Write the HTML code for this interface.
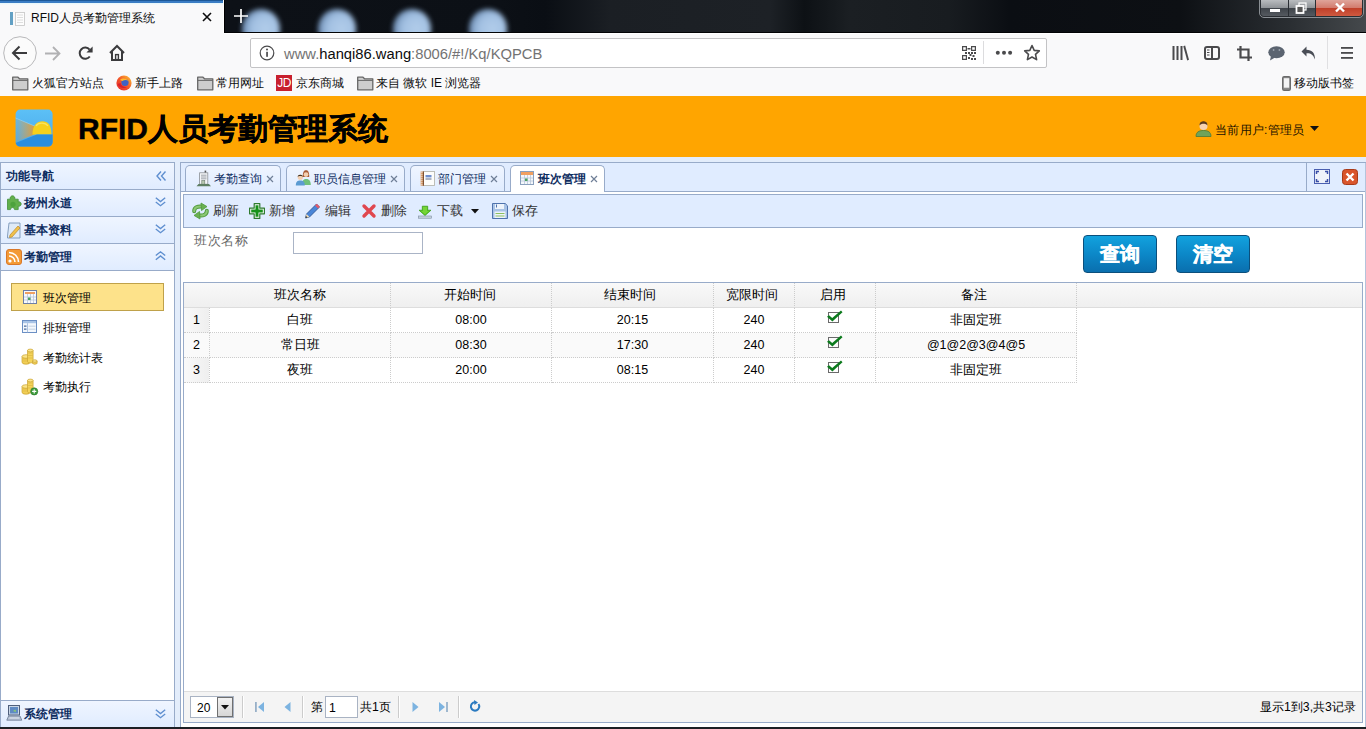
<!DOCTYPE html>
<html><head><meta charset="utf-8">
<style>
*{margin:0;padding:0;box-sizing:border-box}
html,body{width:1366px;height:729px;overflow:hidden;background:#fff;font-family:"Liberation Sans",sans-serif;font-size:12px;color:#000}
.a{position:absolute}
.t{position:absolute;white-space:nowrap;line-height:16px;font-size:12.25px}
svg{position:absolute;overflow:visible}
.ph{background:linear-gradient(to bottom,#eff5ff 0,#e0ecff 100%)}
.navt{color:#0e2d5f;font-weight:bold}
.blob{position:absolute;width:38px;height:40px;border-radius:50%;background:radial-gradient(circle at 62% 50%,#b2cdea 0,#a2c0e2 45%,#6f8fb5 75%,#2a3a50 100%);filter:blur(2.5px)}
.bm{color:#0c0c0d;font-size:12px}
.tb{color:#333;font-size:12.5px}
.dg td{border-right:1px dotted #ccc;border-bottom:1px dotted #ccc;height:25px;text-align:center;padding:0;font-size:12.5px}
</style></head><body>
<!-- ===== title bar ===== -->
<div class="a" style="left:0;top:0;width:1366px;height:33px;background:linear-gradient(90deg,#0d1117 16.4%,#0c1016 36.6%,#0a0e14 39.9%,#1b1f24 44.7%,#1d2126 56.4%,#0d1115 58.9%,#1b1f23 62.2%,#181c20 69.5%,#0b0e13 73.9%,#0d1014 86.4%,#2a2e32 94.4%,#45494c 100.0%);overflow:hidden">
  <div class="blob" style="left:242px;top:9px"></div>
  <div class="blob" style="left:318px;top:9px"></div>
  <div class="blob" style="left:393px;top:9px"></div>
  <div class="blob" style="left:469px;top:9px"></div>
</div>
<div class="a" style="left:224px;top:0;width:1px;height:33px;background:#000"></div><div class="a" style="left:224px;top:32px;width:1142px;height:1px;background:#020305"></div>
<!-- active tab -->
<div class="a" style="left:0;top:0;width:224px;height:33px;background:#f9f9fa"></div>
<div class="a" style="left:0;top:0;width:224px;height:1px;background:#1c5898"></div>
<div class="a" style="left:0;top:1px;width:224px;height:2px;background:#3a7cc4"></div><div class="a" style="left:0;top:3px;width:223px;height:2px;background:linear-gradient(#e2f6fc,#f9f9fa)"></div>
<svg style="left:9px;top:10px" width="17" height="17" viewBox="0 0 17 17"><rect x="1" y="2" width="3" height="13" fill="#62a0c4"/><rect x="6.5" y="2.5" width="9" height="13" fill="#fdfdfd" stroke="#c4c4c4" stroke-width="0.8"/><path d="M8 5h6M8 7.5h6M8 10h6M8 12.5h6" stroke="#d6d6d6" stroke-width="0.8"/></svg>
<div class="t" style="left:31px;top:10px;font-size:12px;color:#0c0c0d">RFID人员考勤管理系统</div>
<svg style="left:202px;top:12px" width="10" height="10" viewBox="0 0 10 10"><path d="M1 1L9 9M9 1L1 9" stroke="#0c0c0d" stroke-width="1.6"/></svg>
<svg style="left:234px;top:9px" width="14" height="14" viewBox="0 0 14 14"><path d="M7 0V14M0 7H14" stroke="#fff" stroke-width="1.7"/></svg>
<!-- window controls -->
<div class="a" style="left:1259px;top:-3px;width:105px;height:21px;border:1px solid #8a8f94;border-radius:0 0 5px 5px;background:#2a2e33"></div>
<div class="a" style="left:1261px;top:0;width:27px;height:16px;background:linear-gradient(#b9bcbf 0,#8f9397 50%,#3f444a 52%,#555a60 100%);border-radius:0 0 0 3px"></div>
<div class="a" style="left:1289px;top:0;width:26px;height:16px;background:linear-gradient(#b9bcbf 0,#8f9397 50%,#3f444a 52%,#555a60 100%)"></div>
<div class="a" style="left:1316px;top:0;width:46px;height:16px;background:linear-gradient(#dfa49a 0,#d27a6c 50%,#c0402a 53%,#cf5a40 100%);border-radius:0 0 3px 0"></div>
<div class="a" style="left:1270px;top:9px;width:10px;height:3px;background:#fff"></div>
<svg style="left:1295px;top:2px" width="12" height="12" viewBox="0 0 12 12"><rect x="4" y="1" width="7" height="7" fill="none" stroke="#fff" stroke-width="1.2"/><rect x="1.5" y="4" width="7" height="7" fill="#555" stroke="#fff" stroke-width="1.8"/></svg>
<svg style="left:1335px;top:3px" width="10" height="9" viewBox="0 0 10 9"><path d="M1 0.5L9 8.5M9 0.5L1 8.5" stroke="#fff" stroke-width="2.4"/></svg>

<!-- ===== nav bar ===== -->
<div class="a" style="left:0;top:33px;width:1366px;height:63px;background:#f9f9fa"></div><div class="a" style="left:224px;top:33px;width:1142px;height:1px;background:#fff"></div><div class="a" style="left:223px;top:0;width:1px;height:33px;background:#fff"></div>
<svg style="left:3px;top:36px" width="34" height="34" viewBox="0 0 34 34"><circle cx="17" cy="17" r="16.3" fill="#fbfbfb" stroke="#b8b8ba" stroke-width="1"/><path d="M10 17H24M16.5 10.5L10 17L16.5 23.5" fill="none" stroke="#3b3b3d" stroke-width="2"/></svg>
<svg style="left:44px;top:45px" width="17" height="17" viewBox="0 0 17 17"><path d="M1 8.5H15M9 2L15.5 8.5L9 15" fill="none" stroke="#b1b1b3" stroke-width="1.8"/></svg>
<svg style="left:77px;top:44px" width="17" height="17" viewBox="0 0 17 17"><path d="M12.6 5.6A5.6 5.6 0 1 0 12.8 12.5" fill="none" stroke="#3b3b3d" stroke-width="2"/><path d="M15.6 2.4V8.6H9.4Z" fill="#3b3b3d"/></svg>
<svg style="left:108px;top:44px" width="18" height="17" viewBox="0 0 18 17"><path d="M2 9L9 2L16 9M4 7.5V16H14V7.5" fill="none" stroke="#3b3b3d" stroke-width="2"/><rect x="7.6" y="10.6" width="2.8" height="5" fill="none" stroke="#3b3b3d" stroke-width="1.4"/></svg>
<div class="a" style="left:250px;top:38px;width:797px;height:30px;background:#fff;border:1px solid #c3c3c5;border-radius:2px"></div>
<svg style="left:259px;top:45px" width="16" height="16" viewBox="0 0 16 16"><circle cx="8" cy="8" r="6.8" fill="none" stroke="#4a4a4c" stroke-width="1.2"/><rect x="7.2" y="6.8" width="1.7" height="5" fill="#4a4a4c"/><circle cx="8" cy="4.6" r="1" fill="#4a4a4c"/></svg>
<div class="t" style="left:284px;top:46px;font-size:14.75px;line-height:17px;color:#737373">www.<span style="color:#0c0c0d">hanqi86.wang</span>:8006/#!/Kq/KQPCB</div>
<svg style="left:962px;top:46px" width="15" height="15" viewBox="0 0 15 15" fill="#4a4a4c">
<path d="M0 0h5v5H0zM1.2 1.2v2.6h2.6V1.2zM9 0h5v5H9zM10.2 1.2v2.6h2.6V1.2zM0 9h5v5H0zM1.2 10.2v2.6h2.6v-2.6z" fill-rule="evenodd"/>
<rect x="5.5" y="2" width="3" height="1.5"/><rect x="6" y="6" width="2" height="2"/><rect x="9" y="6" width="2" height="2"/><rect x="12" y="6" width="2" height="2"/><rect x="7.5" y="8" width="2" height="2"/><rect x="10.5" y="9" width="2" height="2"/><rect x="6" y="11" width="2" height="2"/><rect x="9" y="12" width="2" height="2"/><rect x="12" y="12" width="2" height="2"/><rect x="3" y="6" width="2" height="2"/></svg>
<div class="a" style="left:983px;top:41px;width:1px;height:23px;background:#dcdcde"></div>
<svg style="left:995px;top:50px" width="18" height="6" viewBox="0 0 18 6" fill="#4a4a4c"><circle cx="2.8" cy="2.8" r="2"/><circle cx="9" cy="2.8" r="2"/><circle cx="15.1" cy="2.8" r="2"/></svg>
<svg style="left:1023px;top:44px" width="18" height="18" viewBox="0 0 18 18"><path d="M9 1.5L11.2 6.4L16.3 6.9L12.5 10.4L13.6 15.6L9 13L4.4 15.6L5.5 10.4L1.7 6.9L6.8 6.4Z" fill="none" stroke="#4a4a4c" stroke-width="1.6" stroke-linejoin="round"/></svg>
<!-- right toolbar icons -->
<svg style="left:1172px;top:46px" width="17" height="15" viewBox="0 0 17 15" fill="#4a4a4c"><rect x="0.5" y="0" width="2" height="14"/><rect x="4.5" y="0" width="2" height="14"/><rect x="8.5" y="0" width="2" height="14"/><path d="M11.3 0.3L13.1 -0.4L17 13.7L15.2 14.4Z"/></svg>
<svg style="left:1204px;top:46px" width="16" height="14" viewBox="0 0 16 14"><rect x="1" y="1" width="14" height="12" rx="2" fill="none" stroke="#4a4a4c" stroke-width="2"/><rect x="7" y="1" width="2" height="12" fill="#4a4a4c"/><path d="M3 4h2.5M3 6.5h2.5M3 9h2.5" stroke="#4a4a4c" stroke-width="1.2"/></svg>
<svg style="left:1237px;top:46px" width="15" height="15" viewBox="0 0 15 15"><path d="M3.5 0V11.5H15M0 3.5H11.5V15" fill="none" stroke="#4a4a4c" stroke-width="2.2"/></svg>
<svg style="left:1268px;top:46px" width="17" height="15" viewBox="0 0 17 15"><ellipse cx="8.5" cy="6.3" rx="8.2" ry="6" fill="#5b6470"/><path d="M3 10L2 14.5L7 11.5Z" fill="#5b6470"/><circle cx="5.6" cy="4" r="0.9" fill="#9aa2ac"/><circle cx="11.4" cy="4" r="0.9" fill="#9aa2ac"/></svg>
<svg style="left:1301px;top:46px" width="15" height="14" viewBox="0 0 15 14"><path d="M5.5 0.5L0.5 5.5L5.5 10.5V7.3C9.5 7 12.3 8.5 13.8 13.5C14.5 7.5 11 3.8 5.5 3.8Z" fill="#4a4e56"/></svg>
<div class="a" style="left:1327px;top:36px;width:1px;height:33px;background:#e0e0e2"></div>
<svg style="left:1341px;top:46px" width="13" height="13" viewBox="0 0 13 13" fill="#4a4a4c"><rect x="0" y="1" width="12" height="1.8"/><rect x="0" y="6" width="12" height="1.8"/><rect x="0" y="11" width="12" height="1.8"/></svg>
<!-- bookmarks -->
<svg style="left:12px;top:76px" width="17" height="15" viewBox="0 0 17 15"><path d="M0.7 1.2H6L7.5 2.8H15.8V13.8H0.7Z" fill="#cdcdcd" stroke="#666" stroke-width="1.3" stroke-linejoin="round"/><path d="M0.7 4.4H15.8" stroke="#666" stroke-width="1"/></svg>
<div class="t bm" style="left:32px;top:75px">火狐官方站点</div>
<svg style="left:116px;top:75px" width="16" height="16" viewBox="0 0 16 16"><defs><linearGradient id="ff" x1="0" y1="1" x2="1" y2="0"><stop offset="0" stop-color="#e3262e"/><stop offset="0.5" stop-color="#f2582a"/><stop offset="1" stop-color="#ffcb33"/></linearGradient></defs><circle cx="8" cy="8" r="7.6" fill="url(#ff)"/><circle cx="9" cy="7.5" r="3.6" fill="#3f62c4"/><path d="M4 5C6 3 10 3 12.5 6C11 4.5 8 4.5 6.5 6Z" fill="#ffb82e"/><path d="M1.5 9C3 13 8 14 11 12C8 12.5 5 11 4.5 8Z" fill="#d8202a"/></svg>
<div class="t bm" style="left:135px;top:75px">新手上路</div>
<svg style="left:197px;top:76px" width="17" height="15" viewBox="0 0 17 15"><path d="M0.7 1.2H6L7.5 2.8H15.8V13.8H0.7Z" fill="#cdcdcd" stroke="#666" stroke-width="1.3" stroke-linejoin="round"/><path d="M0.7 4.4H15.8" stroke="#666" stroke-width="1"/></svg>
<div class="t bm" style="left:216px;top:75px">常用网址</div>
<div class="a" style="left:276px;top:75px;width:16px;height:16px;background:#c8202e;color:#fff;font-size:12px;line-height:16px;text-align:center;letter-spacing:-0.5px">JD</div>
<div class="t bm" style="left:296px;top:75px">京东商城</div>
<svg style="left:357px;top:76px" width="17" height="15" viewBox="0 0 17 15"><path d="M0.7 1.2H6L7.5 2.8H15.8V13.8H0.7Z" fill="#cdcdcd" stroke="#666" stroke-width="1.3" stroke-linejoin="round"/><path d="M0.7 4.4H15.8" stroke="#666" stroke-width="1"/></svg>
<div class="t bm" style="left:376px;top:75px">来自 微软 IE 浏览器</div>
<svg style="left:1282px;top:76px" width="9" height="15" viewBox="0 0 9 15"><rect x="0.6" y="0.6" width="7.8" height="13.8" rx="1.6" fill="#8a8a8a" stroke="#6b6b6b" stroke-width="1.2"/><rect x="1.8" y="2.2" width="5.4" height="9.5" fill="#f4f4f4"/></svg>
<div class="t bm" style="left:1294px;top:75px">移动版书签</div>
<!-- ===== app header ===== -->
<div class="a" style="left:0;top:96px;width:1366px;height:61px;background:#ffa500"></div>
<svg style="left:15px;top:109px" width="38" height="38" viewBox="0 0 38 38">
  <defs><linearGradient id="lg1" x1="0" y1="0" x2="0" y2="1"><stop offset="0" stop-color="#5cc0f6"/><stop offset="1" stop-color="#4aa8ea"/></linearGradient>
  <linearGradient id="lg2" x1="0" y1="0" x2="1" y2="0"><stop offset="0" stop-color="#f0a040" stop-opacity="0.1"/><stop offset="1" stop-color="#f59a1a"/></linearGradient></defs>
  <rect x="0.6" y="0.6" width="37" height="37" rx="4.5" fill="url(#lg1)"/>
  <path d="M0.6 9L23 18.5L23 24L0.6 33Z" fill="url(#lg2)"/>
  <path d="M0.6 9L23 18.5" stroke="#9ad8fb" stroke-width="0.8" opacity="0.7"/>
  <path d="M17.5 25.5C17.5 16 22 12.2 27.5 12.2C33 12.2 36.5 16 36.5 25.5Z" fill="#f6d01c"/>
  <path d="M21 17C23 13.5 30 13 33 17" stroke="#fbe870" stroke-width="1.2" fill="none" opacity="0.8"/>
  <path d="M0.6 34L22 25.5H37.6V33.1A4.5 4.5 0 0 1 33.1 37.6H5.1A4.5 4.5 0 0 1 0.6 33.1Z" fill="#2a8ee0"/>
</svg>
<div class="t" style="left:78px;top:111px;font-size:30px;line-height:36px;font-weight:bold;color:#000;-webkit-text-stroke:0.4px #000">RFID人员考勤管理系统</div>
<svg style="left:1195px;top:121px" width="17" height="16" viewBox="0 0 17 16">
  <path d="M1 15.5C1 11 4 9.5 8.5 9.5C13 9.5 16 11 16 15.5Z" fill="#6fa35a" stroke="#4a7a3a" stroke-width="0.8"/>
  <circle cx="8.5" cy="5" r="4" fill="#f6d2b0"/>
  <path d="M4.5 4.5C4.5 1 7 0.3 8.5 0.3C10 0.3 12.5 1 12.5 4.5C11 3 9.5 2.8 8.5 2.8C7.5 2.8 6 3 4.5 4.5Z" fill="#5a3a1e"/>
</svg>
<div class="t" style="left:1215px;top:121.5px;color:#1a1000;letter-spacing:0.25px;font-size:12px">当前用户:管理员</div>
<svg style="left:1310px;top:126px" width="9" height="5" viewBox="0 0 9 5"><path d="M0 0H9L4.5 5Z" fill="#111"/></svg>

<!-- ===== app body ===== -->
<div class="a" style="left:0;top:157px;width:1366px;height:570px;background:#e3edfb"></div>
<!-- left panel -->
<div class="a" style="left:0;top:162px;width:175px;height:570px;border:1px solid #98abc9;background:#fff"></div>
<div class="a ph" style="left:1px;top:163px;width:173px;height:26px"></div>
<div class="a" style="left:1px;top:189px;width:173px;height:1px;background:#98abc9"></div>
<div class="t navt" style="left:6px;top:168px">功能导航</div>
<svg style="left:156px;top:171px" width="10" height="10" viewBox="0 0 10 10"><path d="M5 0.5L1 5L5 9.5M9.5 0.5L5.5 5L9.5 9.5" fill="none" stroke="#5f8fd0" stroke-width="1.4"/></svg>

<div class="a ph" style="left:1px;top:190px;width:173px;height:26px"></div>
<div class="a" style="left:1px;top:216px;width:173px;height:1px;background:#98abc9"></div>
<div class="a ph" style="left:1px;top:217px;width:173px;height:26px"></div>
<div class="a" style="left:1px;top:243px;width:173px;height:1px;background:#98abc9"></div>
<div class="a ph" style="left:1px;top:244px;width:173px;height:26px"></div>
<div class="a" style="left:1px;top:270px;width:173px;height:1px;background:#98abc9"></div>
<div class="t navt" style="left:24px;top:195px">扬州永道</div>
<div class="t navt" style="left:24px;top:222px">基本资料</div>
<div class="t navt" style="left:24px;top:249px">考勤管理</div>
<svg style="left:155px;top:197px" width="11" height="10" viewBox="0 0 11 10"><path d="M0.8 0.8L5.5 4.5L10.2 0.8M0.8 5L5.5 8.7L10.2 5" fill="none" stroke="#5f8fd0" stroke-width="1.4"/></svg>
<svg style="left:155px;top:224px" width="11" height="10" viewBox="0 0 11 10"><path d="M0.8 0.8L5.5 4.5L10.2 0.8M0.8 5L5.5 8.7L10.2 5" fill="none" stroke="#5f8fd0" stroke-width="1.4"/></svg>
<svg style="left:155px;top:251px" width="11" height="10" viewBox="0 0 11 10"><path d="M0.8 4.5L5.5 0.8L10.2 4.5M0.8 8.7L5.5 5L10.2 8.7" fill="none" stroke="#5f8fd0" stroke-width="1.4"/></svg>
<!-- accordion icons -->
<svg style="left:6px;top:196px" width="16" height="15" viewBox="0 0 16 15"><path d="M1.5 3.2H4.3A2.4 2.4 0 1 1 8.7 3.2H12.2V5.8A2.3 2.3 0 1 1 12.2 10.2V13.6H8.6A2.1 2.1 0 0 0 4.4 13.6H1.5Z" fill="#62b04c" stroke="#44913a" stroke-width="0.8"/><circle cx="7" cy="8.3" r="2.6" fill="#3f9a33" opacity="0.6"/></svg>
<svg style="left:6px;top:222px" width="16" height="17" viewBox="0 0 16 17"><path d="M3 1H14V16H1.5V14Z" fill="#dfeaf7" stroke="#7c96b8" stroke-width="0.9"/><path d="M4 13L12 4L14 6L6 15L3.5 15.5Z" fill="#f2c14a" stroke="#b8862a" stroke-width="0.7"/></svg>
<svg style="left:6px;top:249px" width="16" height="16" viewBox="0 0 16 16"><rect x="0.5" y="0.5" width="15" height="15" rx="2.5" fill="#f39a36" stroke="#d9782a"/><circle cx="4" cy="12" r="1.6" fill="#fff"/><path d="M3 7A6 6 0 0 1 9 13M3 3.5A9.5 9.5 0 0 1 12.5 13" fill="none" stroke="#fff" stroke-width="1.6"/></svg>
<!-- menu items -->
<div class="a" style="left:11px;top:283px;width:153px;height:28px;background:#fde28a;border:1px solid #bfa14a"></div>
<svg style="left:23px;top:290px" width="14" height="14" viewBox="0 0 14 14"><rect x="0.5" y="0.5" width="13" height="13" fill="#f8fafd" stroke="#6f7fa6"/><rect x="2" y="2" width="10" height="2" fill="#f0a060"/><path d="M1 7H13M1 10H13M4.5 4V13M7.5 4V13M10.5 4V13" stroke="#b9c7d9" stroke-width="0.8"/><rect x="5" y="7.5" width="2.5" height="2.5" fill="#4aa060"/></svg>
<div class="t" style="left:43px;top:289.5px;color:#000">班次管理</div>
<svg style="left:22px;top:320px" width="15" height="13" viewBox="0 0 15 13"><rect x="0.5" y="0.5" width="14" height="12" fill="#f4f8fd" stroke="#6b8fc4"/><rect x="1" y="1" width="13" height="2.2" fill="#a9c4e6"/><path d="M5.5 3.2V12.5" stroke="#9ab4d8" stroke-width="0.8"/><path d="M2 6.2H4.5M2 9.2H4.5" stroke="#4a6a9a" stroke-width="1.2"/><path d="M6.5 6.2H13.5M6.5 9.2H13.5" stroke="#b8c8dc" stroke-width="0.8"/></svg>
<div class="t" style="left:43px;top:320px;color:#000">排班管理</div>
<svg style="left:21px;top:348px" width="17" height="17" viewBox="0 0 17 17"><path d="M1 8.5V14.2A4 2 0 0 0 9 14.2V8.5Z" fill="#f2cf55" stroke="#c9a232" stroke-width="0.7"/><ellipse cx="5" cy="8.5" rx="4" ry="1.8" fill="#fbe58a" stroke="#c9a232" stroke-width="0.7"/><path d="M2 11H8M2 13H8" stroke="#d9b240" stroke-width="0.6"/><path d="M6.5 2.5V13.5A2.8 1.5 0 0 0 12.1 13.5V2.5Z" fill="#f4d45a" stroke="#c9a232" stroke-width="0.7"/><ellipse cx="9.3" cy="2.5" rx="2.8" ry="1.4" fill="#fbe58a" stroke="#c9a232" stroke-width="0.7"/><path d="M7 5H11.6M7 7.5H11.6M7 10H11.6" stroke="#d9b240" stroke-width="0.6"/><path d="M11.5 13V15.5A2.8 1.4 0 0 0 16.1 15.5V13Z" fill="#f2cf55" stroke="#c9a232" stroke-width="0.7"/><ellipse cx="13.8" cy="13" rx="2.3" ry="1.2" fill="#fbe58a" stroke="#c9a232" stroke-width="0.7"/></svg>
<div class="t" style="left:43px;top:350px;color:#000">考勤统计表</div>
<svg style="left:21px;top:378px" width="17" height="17" viewBox="0 0 17 17"><path d="M1 8.5V14.2A4 2 0 0 0 9 14.2V8.5Z" fill="#f2cf55" stroke="#c9a232" stroke-width="0.7"/><ellipse cx="5" cy="8.5" rx="4" ry="1.8" fill="#fbe58a" stroke="#c9a232" stroke-width="0.7"/><path d="M2 11H8M2 13H8" stroke="#d9b240" stroke-width="0.6"/><path d="M6.5 2.5V13.5A2.8 1.5 0 0 0 12.1 13.5V2.5Z" fill="#f4d45a" stroke="#c9a232" stroke-width="0.7"/><ellipse cx="9.3" cy="2.5" rx="2.8" ry="1.4" fill="#fbe58a" stroke="#c9a232" stroke-width="0.7"/><path d="M7 5H11.6M7 7.5H11.6M7 10H11.6" stroke="#d9b240" stroke-width="0.6"/><circle cx="13.2" cy="13.4" r="3.6" fill="#3c9a3c" stroke="#2a7a2a" stroke-width="0.6"/><path d="M13.2 11.3V15.5M11.1 13.4H15.3" stroke="#fff" stroke-width="1.1"/></svg>
<div class="t" style="left:43px;top:379px;color:#000">考勤执行</div>
<!-- bottom accordion -->
<div class="a" style="left:1px;top:700px;width:173px;height:1px;background:#98abc9"></div>
<div class="a ph" style="left:1px;top:701px;width:173px;height:26px"></div>
<svg style="left:6px;top:705px" width="17" height="16" viewBox="0 0 17 16"><rect x="2.5" y="0.5" width="11" height="9.5" fill="#c9d6e6" stroke="#4f5f7c"/><rect x="4" y="2" width="8" height="6.5" fill="#5f8ac4"/><path d="M7 6L9.5 4.5L10 7Z" fill="#8ccf6a"/><path d="M0.8 15.2L2.6 11H14L15.8 15.2Z" fill="#b9c4d6" stroke="#6a7892" stroke-width="0.8"/><path d="M3.5 13H13" stroke="#e6ecf4" stroke-width="0.8"/></svg>
<div class="t navt" style="left:24px;top:706px">系统管理</div>
<svg style="left:155px;top:709px" width="11" height="10" viewBox="0 0 11 10"><path d="M0.8 0.8L5.5 4.5L10.2 0.8M0.8 5L5.5 8.7L10.2 5" fill="none" stroke="#5f8fd0" stroke-width="1.4"/></svg>
<!-- ===== main panel ===== -->
<div class="a" style="left:180px;top:162px;width:1186px;height:570px;border:1px solid #98abc9;background:#fff"></div>
<div class="a" style="left:181px;top:163px;width:1184px;height:28px;background:#e0ecff"></div>
<div class="a" style="left:181px;top:191px;width:1184px;height:1px;background:#98abc9"></div>
<div class="a" style="left:1306px;top:163px;width:1px;height:28px;background:#98abc9"></div>
<div class="a" style="left:1365px;top:163px;width:1px;height:570px;background:#b4c4dc"></div>
<!-- tabs -->
<div class="a ph" style="left:185px;top:165px;width:96px;height:26px;border:1px solid #98abc9;border-bottom:0;border-radius:5px 5px 0 0"></div>
<div class="a ph" style="left:286px;top:165px;width:119px;height:26px;border:1px solid #98abc9;border-bottom:0;border-radius:5px 5px 0 0"></div>
<div class="a ph" style="left:410px;top:165px;width:95px;height:26px;border:1px solid #98abc9;border-bottom:0;border-radius:5px 5px 0 0"></div>
<div class="a" style="left:181px;top:191px;width:1184px;height:1px;background:#98abc9"></div>
<div class="a" style="left:510px;top:165px;width:95px;height:27px;border:1px solid #98abc9;border-bottom:0;border-radius:5px 5px 0 0;background:#fff"></div>
<!-- tab contents -->
<svg style="left:196px;top:170px" width="15" height="17" viewBox="0 0 15 17"><rect x="8.6" y="0.6" width="1.6" height="2.4" fill="#555"/><rect x="3.6" y="2.8" width="8.2" height="11.4" fill="#f4f6f8" stroke="#8a8f94" stroke-width="0.8"/><path d="M5 5.2H10.5M5 7H10.5M5 8.8H10.5" stroke="#8a9098" stroke-width="0.8"/><rect x="5.8" y="10.6" width="3" height="3.6" fill="#b8c8b0" stroke="#6a7a6a" stroke-width="0.6"/><path d="M0.5 16.3L2.5 14H13L15 16.3Z" fill="#5e7e62"/></svg>
<div class="t navt" style="left:214px;top:171px;font-weight:normal">考勤查询</div>
<svg style="left:266px;top:175px" width="8" height="8" viewBox="0 0 8 8"><path d="M1 1L7 7M7 1L1 7" stroke="#6f7f97" stroke-width="1.2"/></svg>
<svg style="left:295px;top:170px" width="17" height="16" viewBox="0 0 17 16"><path d="M7.8 7C7.6 2 9 0.3 11 0.3C13 0.3 14.4 2 14.2 7Z" fill="#a85a34"/><circle cx="11" cy="4.6" r="2.4" fill="#f3cfb0"/><path d="M7 15C7 10.5 8.8 9 11.2 9C13.6 9 15.8 10.5 15.8 15Z" fill="#6fc07a"/><circle cx="5.3" cy="7.2" r="2.6" fill="#f3cfb0"/><path d="M2.6 6.8C2.6 4 8 4 8 6.8C7 5.6 3.6 5.6 2.6 6.8Z" fill="#3e3325"/><path d="M0.8 15.6C0.8 11.8 2.6 10.6 5.3 10.6C8 10.6 9.8 11.8 9.8 15.6Z" fill="#5b9bd2"/></svg>
<div class="t navt" style="left:314px;top:171px;font-weight:normal">职员信息管理</div>
<svg style="left:390px;top:175px" width="8" height="8" viewBox="0 0 8 8"><path d="M1 1L7 7M7 1L1 7" stroke="#6f7f97" stroke-width="1.2"/></svg>
<svg style="left:420px;top:171px" width="15" height="15" viewBox="0 0 15 15"><rect x="3.5" y="0.5" width="11" height="14" fill="#fdfdfb" stroke="#b8b8b0" stroke-width="0.9"/><rect x="0.6" y="0.5" width="3.2" height="14.2" fill="#d9a070"/><path d="M0.6 1.5H3.8M0.6 3.5H3.8M0.6 5.5H3.8M0.6 7.5H3.8M0.6 9.5H3.8M0.6 11.5H3.8M0.6 13.5H3.8" stroke="#fff" stroke-width="0.6" opacity="0.7"/><rect x="2.8" y="0.5" width="1" height="14.2" fill="#6a3a1a"/><rect x="5.5" y="4" width="6" height="2.4" fill="#6f8fd0"/><path d="M5.5 8H11.5" stroke="#4a5a7a" stroke-width="0.9"/></svg>
<div class="t navt" style="left:438px;top:171px;font-weight:normal">部门管理</div>
<svg style="left:490px;top:175px" width="8" height="8" viewBox="0 0 8 8"><path d="M1 1L7 7M7 1L1 7" stroke="#6f7f97" stroke-width="1.2"/></svg>
<svg style="left:520px;top:171px" width="14" height="14" viewBox="0 0 14 14"><rect x="0.5" y="0.5" width="13" height="13" fill="#f4f7fb" stroke="#8aa0bd"/><rect x="1" y="1" width="12" height="3" fill="#f0a060"/><path d="M1 7H13M1 10H13M4.5 4V13M7.5 4V13M10.5 4V13" stroke="#b9c7d9" stroke-width="0.8"/><rect x="5" y="7.5" width="2.5" height="2.5" fill="#4aa060"/></svg>
<div class="t navt" style="left:538px;top:171px">班次管理</div>
<svg style="left:590px;top:175px" width="8" height="8" viewBox="0 0 8 8"><path d="M1 1L7 7M7 1L1 7" stroke="#6f7f97" stroke-width="1.2"/></svg>
<!-- panel tools -->
<svg style="left:1314px;top:169px" width="16" height="15" viewBox="0 0 16 15"><rect x="0.5" y="0.5" width="15" height="14" fill="#eef2fa" stroke="#4a5fb0"/><path d="M2.5 5V2.5H5M11 2.5H13.5V5M13.5 10V12.5H11M5 12.5H2.5V10" fill="none" stroke="#3a4fa8" stroke-width="1.5"/></svg>
<svg style="left:1342px;top:169px" width="16" height="16" viewBox="0 0 16 16"><rect x="0.5" y="0.5" width="15" height="15" rx="3" fill="#d9552c" stroke="#a83a18"/><path d="M4.5 4.5L11.5 11.5M11.5 4.5L4.5 11.5" stroke="#fff" stroke-width="2.4"/></svg>

<!-- toolbar -->
<div class="a" style="left:183px;top:194px;width:1180px;height:34px;border:1px solid #98abc9;background:#e0ecff"></div>
<svg style="left:192px;top:203px" width="17" height="16" viewBox="0 0 17 16"><path d="M2.2 8.2C2.2 4.2 5.5 3.2 10 3.6" fill="none" stroke="#4f9a3c" stroke-width="4" stroke-linecap="round"/><path d="M2.2 8.2C2.2 4.2 5.5 3.2 10 3.6" fill="none" stroke="#8cc874" stroke-width="2" stroke-linecap="round"/><path d="M9 0L15 3.6L9.5 7.5Z" fill="#6ab050" stroke="#4f9a3c" stroke-width="0.8"/><path d="M14.8 7.8C14.8 11.8 11.5 12.8 7 12.4" fill="none" stroke="#4f9a3c" stroke-width="4" stroke-linecap="round"/><path d="M14.8 7.8C14.8 11.8 11.5 12.8 7 12.4" fill="none" stroke="#8cc874" stroke-width="2" stroke-linecap="round"/><path d="M8 16L2 12.4L7.5 8.5Z" fill="#6ab050" stroke="#4f9a3c" stroke-width="0.8"/></svg>
<div class="t tb" style="left:213px;top:203px">刷新</div>
<svg style="left:249px;top:203px" width="16" height="16" viewBox="0 0 16 16"><path d="M5.2 0.6H10.8V5.2H15.4V10.8H10.8V15.4H5.2V10.8H0.6V5.2H5.2Z" fill="#fff" stroke="#2f7a2f" stroke-width="1.2" stroke-linejoin="round"/><path d="M6.5 2.2H9.5V6.5H13.8V9.5H9.5V13.8H6.5V9.5H2.2V6.5H6.5Z" fill="#17921a"/></svg>
<div class="t tb" style="left:269px;top:203px">新增</div>
<svg style="left:304px;top:203px" width="17" height="16" viewBox="0 0 17 16"><path d="M1.5 15L2.5 11L12.5 1L15.5 4L5.5 14Z" fill="#4a86d8" stroke="#244c8a" stroke-width="0.8"/><path d="M11 2.5L14 5.5L15.8 3.7L12.8 0.7Z" fill="#e05a6a"/><path d="M1.5 15L2.5 11L5.5 14Z" fill="#f1dcb5"/><path d="M1.5 15L2 13L3.5 14.5Z" fill="#222"/></svg>
<div class="t tb" style="left:325px;top:203px">编辑</div>
<svg style="left:362px;top:204px" width="14" height="14" viewBox="0 0 14 14"><path d="M2 2L12 12M12 2L2 12" stroke="#e0474f" stroke-width="3.4" stroke-linecap="round"/></svg>
<div class="t tb" style="left:381px;top:203px">删除</div>
<svg style="left:418px;top:203px" width="14" height="16" viewBox="0 0 14 16"><path d="M4.3 3.2H9.7V7.2H13L7 12.6L1 7.2H4.3Z" fill="#52c41a" stroke="#3a9a10" stroke-width="0.7"/><path d="M5 4H9V8H11L7 11.5L3 8H5Z" fill="#8ee04a" opacity="0.6"/><rect x="0.5" y="13" width="13" height="2.2" fill="#c9d3de" stroke="#7a8ca0" stroke-width="0.6"/></svg>
<div class="t tb" style="left:437px;top:203px">下载</div>
<svg style="left:471px;top:209px" width="8" height="5" viewBox="0 0 8 5"><path d="M0 0H8L4 4.5Z" fill="#111"/></svg>
<svg style="left:492px;top:203px" width="16" height="16" viewBox="0 0 16 16"><path d="M0.5 0.5H13.2L15.5 2.8V15.5H0.5Z" fill="#a9c3e6" stroke="#4f73ad"/><rect x="3" y="1" width="9" height="5" fill="#eef4fb"/><rect x="4" y="1.5" width="1" height="3" fill="#4f73ad"/><rect x="2.5" y="8.5" width="11" height="6.5" fill="#eef4fb"/><path d="M3.5 10.5H12.5M3.5 13H12.5" stroke="#8cc060" stroke-width="1.2"/></svg>
<div class="t tb" style="left:512px;top:203px">保存</div>

<!-- search form -->
<div class="t" style="left:194px;top:233px;font-size:13px;letter-spacing:0.7px;color:#666">班次名称</div>
<div class="a" style="left:293px;top:232px;width:130px;height:22px;border:1px solid #aab4c6;background:#fff"></div>
<div class="a" style="left:1083px;top:235px;width:74px;height:38px;border:1px solid #0b4f7c;border-radius:4px;background:linear-gradient(#12a2de 0,#0c88c8 50%,#0a6fae 100%);color:#fff;font-weight:bold;font-size:20px;line-height:36px;text-align:center;-webkit-text-stroke:0.5px #fff">查询</div>
<div class="a" style="left:1176px;top:235px;width:74px;height:38px;border:1px solid #0b4f7c;border-radius:4px;background:linear-gradient(#12a2de 0,#0c88c8 50%,#0a6fae 100%);color:#fff;font-weight:bold;font-size:20px;line-height:36px;text-align:center;-webkit-text-stroke:0.5px #fff">清空</div>

<!-- datagrid -->
<div class="a" style="left:183px;top:282px;width:1180px;height:441px;border:1px solid #98abc9;background:#fff"></div>
<div class="a" style="left:184px;top:283px;width:1178px;height:24px;background:linear-gradient(#f9f9f9,#efefef)"></div>
<div class="a" style="left:184px;top:307px;width:1178px;height:1px;background:#dddddd"></div>
<div class="a" style="left:184px;top:308px;width:25px;height:75px;background:linear-gradient(to right,#f9f9f9,#efefef)"></div>
<table class="a dg" style="left:184px;top:283px;border-collapse:separate;border-spacing:0">
<tr style="height:25px"><td style="width:26px;border-right:0;border-bottom:1px solid #ddd"></td><td style="width:181px;border-bottom:1px solid #ddd;padding-right:1px">班次名称</td><td style="width:161px;border-bottom:1px solid #ddd;padding-right:2px">开始时间</td><td style="width:162px;border-bottom:1px solid #ddd;padding-right:5px">结束时间</td><td style="width:81px;border-bottom:1px solid #ddd;padding-right:4px">宽限时间</td><td style="width:81px;border-bottom:1px solid #ddd;padding-right:4px">启用</td><td style="width:201px;border-bottom:1px solid #ddd;padding-right:4px">备注</td></tr>
<tr><td style="width:26px;text-align:left;padding-left:9px">1</td><td>白班</td><td>08:00</td><td>20:15</td><td>240</td><td class="ck"></td><td>非固定班</td></tr>
<tr style="background:#fafafa"><td style="text-align:left;padding-left:9px;background:none">2</td><td>常日班</td><td>08:30</td><td>17:30</td><td>240</td><td class="ck"></td><td>@1@2@3@4@5</td></tr>
<tr><td style="text-align:left;padding-left:9px">3</td><td>夜班</td><td>20:00</td><td>08:15</td><td>240</td><td class="ck"></td><td>非固定班</td></tr>
</table>
<svg style="left:826px;top:310px" width="17" height="14" viewBox="0 0 17 14"><rect x="2.5" y="2.5" width="10" height="10" fill="none" stroke="#6a6a6a" stroke-width="1"/><path d="M1 6.8L3 5.2L6.2 8L15 0.6L16.5 2.2L6.4 11.6Z" fill="#0b7a1c"/></svg>
<svg style="left:826px;top:335px" width="17" height="14" viewBox="0 0 17 14"><rect x="2.5" y="2.5" width="10" height="10" fill="none" stroke="#6a6a6a" stroke-width="1"/><path d="M1 6.8L3 5.2L6.2 8L15 0.6L16.5 2.2L6.4 11.6Z" fill="#0b7a1c"/></svg>
<svg style="left:826px;top:360px" width="17" height="14" viewBox="0 0 17 14"><rect x="2.5" y="2.5" width="10" height="10" fill="none" stroke="#6a6a6a" stroke-width="1"/><path d="M1 6.8L3 5.2L6.2 8L15 0.6L16.5 2.2L6.4 11.6Z" fill="#0b7a1c"/></svg>
<!-- pagination -->
<div class="a" style="left:184px;top:691px;width:1178px;height:1px;background:#dddddd"></div>
<div class="a" style="left:184px;top:692px;width:1178px;height:30px;background:#f4f4f4"></div>
<div class="a" style="left:190px;top:696px;width:44px;height:22px;border:1px solid #a9b3c3;background:#fff"></div>
<div class="t" style="left:197px;top:700px;font-size:12px">20</div>
<div class="a" style="left:217px;top:697px;width:16px;height:20px;border:1px solid #707070;background:linear-gradient(#f2f2f2,#d6d6d6)"></div>
<svg style="left:221px;top:705px" width="8" height="5" viewBox="0 0 8 5"><path d="M0 0H8L4 4.5Z" fill="#111"/></svg>
<div class="a" style="left:242px;top:696px;width:1px;height:22px;background:#ccc;box-shadow:1px 0 0 #fff"></div>
<svg style="left:255px;top:702px" width="9" height="10" viewBox="0 0 9 10"><rect x="0" y="0" width="1.8" height="10" fill="#98b0c8"/><path d="M9 0V10L3 5Z" fill="#7cb3e0"/></svg>
<svg style="left:284px;top:702px" width="7" height="10" viewBox="0 0 7 10"><path d="M6.5 0V10L0.5 5Z" fill="#7cb3e0"/></svg>
<div class="a" style="left:302px;top:696px;width:1px;height:22px;background:#ccc;box-shadow:1px 0 0 #fff"></div>
<div class="t" style="left:311px;top:699px">第</div>
<div class="a" style="left:325px;top:696px;width:33px;height:22px;border:1px solid #a9b3c3;background:#fff"></div>
<div class="t" style="left:329px;top:700px">1</div>
<div class="t" style="left:360px;top:699px">共1页</div>
<div class="a" style="left:398px;top:696px;width:1px;height:22px;background:#ccc;box-shadow:1px 0 0 #fff"></div>
<svg style="left:412px;top:702px" width="7" height="10" viewBox="0 0 7 10"><path d="M0.5 0V10L6.5 5Z" fill="#7cb3e0"/></svg>
<svg style="left:439px;top:702px" width="9" height="10" viewBox="0 0 9 10"><path d="M0 0V10L6 5Z" fill="#7cb3e0"/><rect x="7" y="0" width="2" height="10" fill="#9fb8cf"/></svg>
<div class="a" style="left:458px;top:696px;width:1px;height:22px;background:#ccc;box-shadow:1px 0 0 #fff"></div>
<svg style="left:469px;top:700px" width="12" height="12" viewBox="0 0 12 12"><path d="M9.5 4A4.2 4.2 0 1 1 6 2.2" fill="none" stroke="#2a7ac0" stroke-width="2"/><path d="M5 0L9 2.5L5.5 5Z" fill="#2a7ac0"/></svg>
<div class="t" style="left:1260px;top:699px">显示1到3,共3记录</div>
<!-- taskbar edge -->
<div class="a" style="left:0;top:727px;width:1366px;height:2px;background:#1c1f24"></div>
</body></html>
